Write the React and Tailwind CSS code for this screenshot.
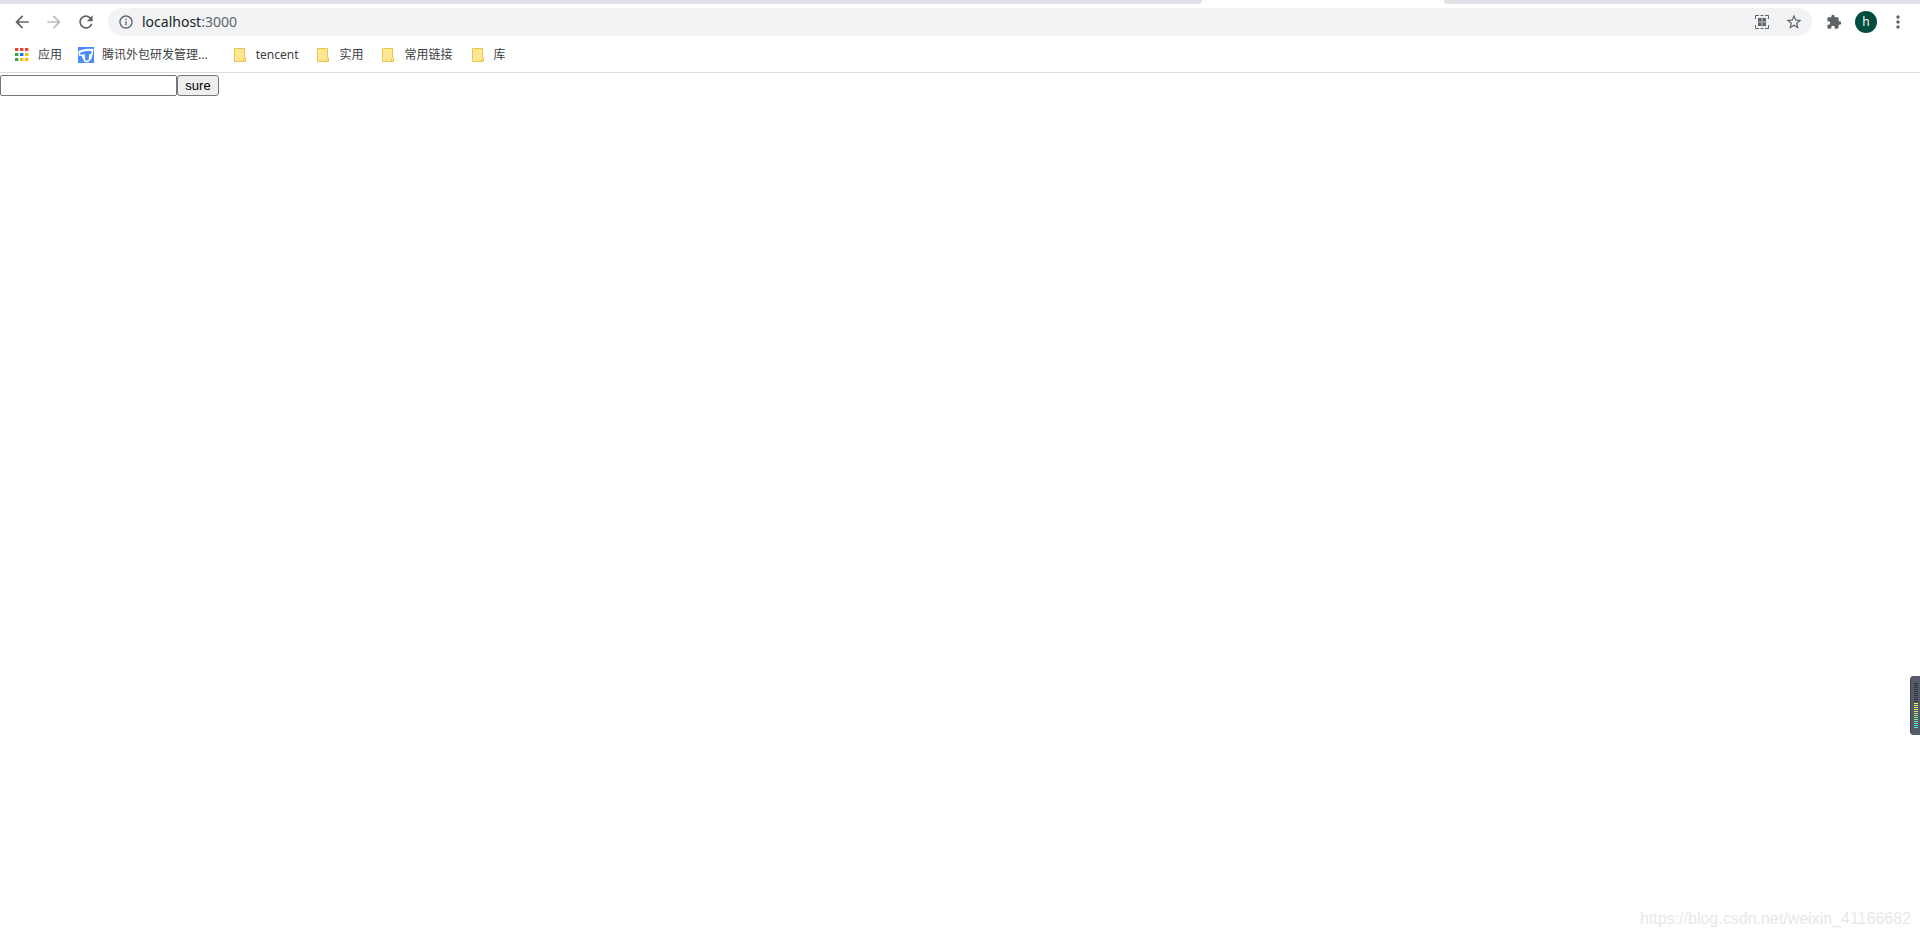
import React from "react";
import { MdArrowBack, MdArrowForward, MdRefresh, MdInfoOutline, MdStarBorder, MdExtension, MdMoreVert } from "react-icons/md";

const bookmarks = ["tencent", "实用", "常用链接", "库"];

const appDots = [
  "#ea4335", "#ea4335", "#ea4335",
  "#34a853", "#1a73e8", "#fbbc04",
  "#34a853", "#fbbc04", "#fbbc04",
];

const meterBars = [
  "#30353f", "#30353f", "#30353f", "#30353f", "#30353f", "#30353f", "#30353f", "#30353f", "#30353f", "#30353f",
  "#f0ea4a", "#e6ea4e", "#daea55", "#ceea5c", "#c0ea66", "#b0ea70", "#a0ea7c", "#90ea88",
  "#80ea9a", "#70eaac", "#62eabe", "#56eace", "#4eeadc",
];

const AppsIcon = () => (
  <svg width="14" height="14" viewBox="0 0 14 14">
    {appDots.map((color, i) => (
      <rect key={i} x={(i % 3) * 5} y={Math.floor(i / 3) * 5} width="3.4" height="3" fill={color} />
    ))}
  </svg>
);

const TencentIcon = () => (
  <svg width="16" height="16" viewBox="0 0 16 16">
    <rect width="16" height="16" fill="#4a8cf7" />
    <path d="M0 4.5C4 2 9 1.2 15.5 2L15 6L13.5 11.5L10 15.5L6.5 15L3.5 8.8L1.2 9Z" fill="#fff" />
    <path d="M2 6C5 4.4 9 3.8 13.8 4.2L13.2 7L11.3 6.9L10.6 13.5L7.2 13.2L6.6 7.3C5 7.4 4 7.6 2.8 8Z" fill="#4a8cf7" />
  </svg>
);

const FolderIcon = () => (
  <svg width="12" height="14" viewBox="0 0 12 14">
    <path d="M0.5 0.5H10.5V9.5H11.5V13.5H0.5Z" fill="#ffe793" stroke="#e8c64a" />
    <path d="M9.5 13V10.5" fill="none" stroke="#e8c64a" />
  </svg>
);

const QrIcon = () => (
  <svg width="14" height="14" viewBox="0 0 14 14" fill="none" stroke="#5f6368">
    <path d="M0.5 4V0.5H4M10 0.5H13.5V4M13.5 10V13.5H10M4 13.5H0.5V10M5.5 0.5H8.5M5.5 13.5H8.5" />
    <path d="M3 3H6.5V6.5H3ZM7.5 3H11V6.5H7.5ZM3 7.5H6.5V11H3ZM7.5 7.5H11V11H7.5Z" fill="#5f6368" stroke="none" />
    <path d="M2.5 7H11.5M7 2.5V11.5" strokeOpacity="0.5" />
  </svg>
);

const IconButton = ({ label, className = "", children }) => (
  <button aria-label={label} className={"flex items-center justify-center size-5 " + className}>
    {children}
  </button>
);

const App = () => {
  return (
    <div className="min-h-screen flex flex-col bg-white font-['Noto_Sans','Noto_Sans_CJK_SC',sans-serif]">
      {/* tab strip */}
      <div className="flex h-1">
        <div className="w-[1202px] rounded-br-lg bg-[#dee1e6]" />
        <div className="w-[242px]" />
        <div className="flex-1 rounded-bl-lg bg-[#dee1e6]" />
      </div>

      {/* toolbar */}
      <header className="flex items-center gap-3 h-9 px-3 text-[#5f6368]">
        <IconButton label="Back"><MdArrowBack size={20} /></IconButton>
        <IconButton label="Forward" className="text-[#babcbe]"><MdArrowForward size={20} /></IconButton>
        <IconButton label="Reload"><MdRefresh size={20} /></IconButton>
        <div className="flex-1 flex items-center gap-3 h-7 px-2 rounded-full bg-[#f1f3f4]">
          <div className="flex-1 flex items-center gap-2 pl-0.5">
            <MdInfoOutline size={16} />
            <p className="text-sm">
              <span className="text-[#202124]">localhost</span>:3000
            </p>
          </div>
          <IconButton label="QR code"><QrIcon /></IconButton>
          <IconButton label="Bookmark"><MdStarBorder size={18} /></IconButton>
        </div>
        <IconButton label="Extensions"><MdExtension size={16} /></IconButton>
        <button className="size-[22px] -mx-px rounded-full bg-[#004d40] text-white text-xs">h</button>
        <IconButton label="Menu"><MdMoreVert size={20} /></IconButton>
      </header>

      {/* bookmarks */}
      <nav className="flex items-center h-[33px] pb-0.5 pl-[15px] border-b border-[#dadce0] text-xs text-[#3c4043]">
        <a href="#" className="flex items-center gap-[9px] mr-4"><AppsIcon />应用</a>
        <a href="#" className="flex items-center gap-2 mr-[26px]"><TencentIcon />腾讯外包研发管理...</a>
        <div className="flex items-center gap-[19px]">
          {bookmarks.map((name) => (
            <a key={name} href="#" className="flex items-center gap-2.5">
              <FolderIcon />
              {name}
            </a>
          ))}
        </div>
      </nav>

      {/* page */}
      <main className="flex-1 flex flex-col justify-between pt-0.5">
        <form className="flex font-['Liberation_Sans',sans-serif] text-[13px] text-black">
          <input type="text" aria-label="value" className="w-[177px] h-[21px] px-0.5 border border-[#767676] rounded-xs" />
          <button type="button" className="w-[42px] h-[21px] border border-[#767676] rounded-[3px] bg-[#efefef]">sure</button>
        </form>
        <p className="self-end pr-[9px] pb-1.5 font-['Liberation_Sans',sans-serif] text-base text-[#e8e8e8]">
          https://blog.csdn.net/weixin_41166682
        </p>
      </main>

      {/* level meter docked on the right edge */}
      <div className="fixed right-0 top-[676px] flex flex-col gap-px w-2.5 h-[59px] pt-[7px] pl-[3px] rounded-l bg-[#555b69] border-l border-[#3c414c]">
        {meterBars.map((color, i) => (
          <span key={i} className="w-1 h-px" style={{ backgroundColor: color }} />
        ))}
      </div>
    </div>
  );
};

export default App;
